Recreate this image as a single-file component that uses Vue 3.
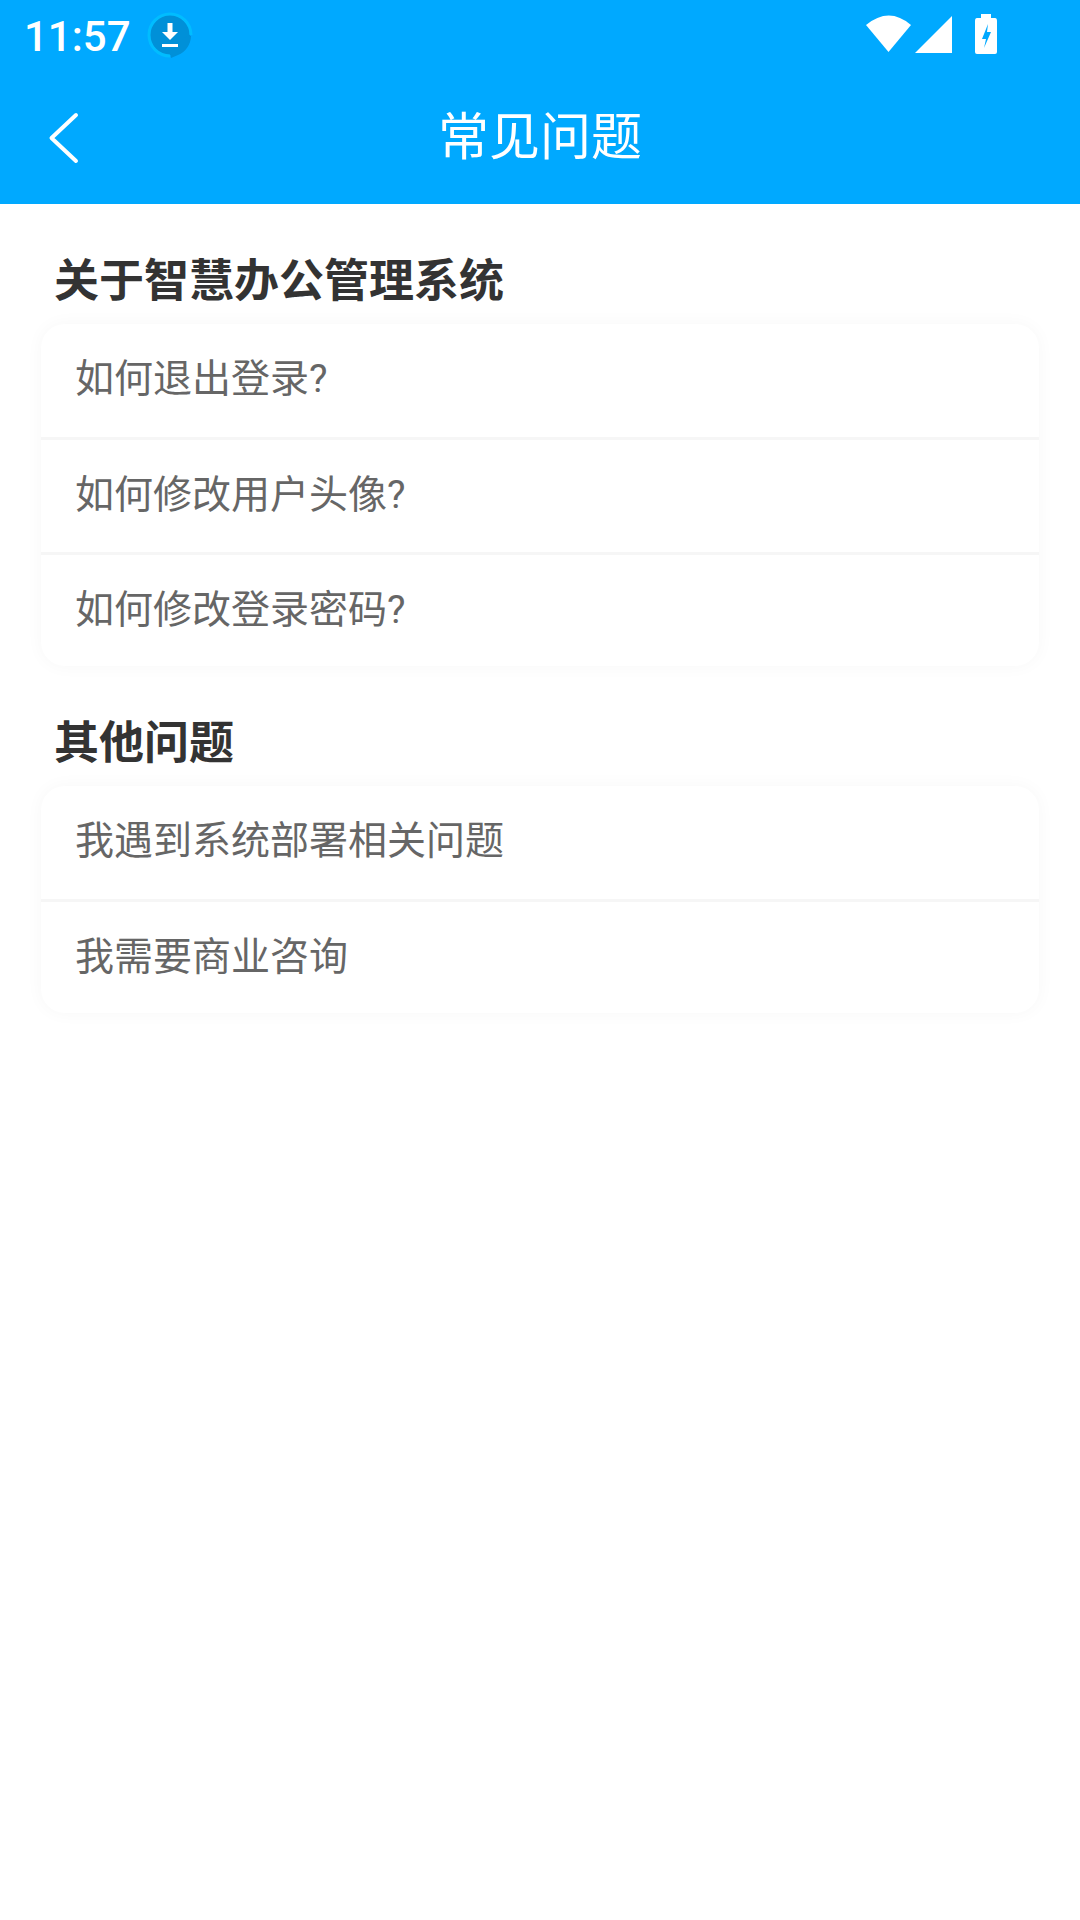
<template>
  <div class="page">
    <header class="top">
      <div class="status">
        <span class="time">11:57</span>
        <svg class="dl" width="46" height="48" viewBox="0 0 46 48">
          <circle cx="23" cy="23" r="20" fill="#0090d8" />
          <path d="M44 23A21 21 0 1 0 23 44" fill="none" stroke="#00bdff" stroke-width="3" />
          <path d="M44 24a21 21 0 0 1-13 19l-7 3-1-6 18-17z" fill="#0090d8" />
          <path d="M20.500 11h5v9h5.500l-8 8-8-8h5.500z M15 32h16v3H15z" fill="#fff" />
        </svg>
        <div class="sys">
          <svg width="46" height="40" viewBox="0 0 46 40"><path d="M0 11Q23-8 45 11L22.500 38z" fill="#fff" /></svg>
          <svg width="38" height="38" viewBox="0 0 38 38"><path d="M37 0V37H0z" fill="#fff" /></svg>
          <svg class="batt" width="24" height="40" viewBox="0 0 24 40">
            <path d="M7 0h10v4h4q2 0 2 3v31q0 2-2 2H3q-2 0-2-2V7q0-3 2-3h4z" fill="#fff" />
            <path d="M14 10l-6 15h4l-2 9 7-16h-4z" fill="#00a9ff" />
          </svg>
        </div>
      </div>
      <div class="nav">
        <svg class="back" width="34" height="54" viewBox="0 0 34 54">
          <path d="M29 3L4.500 26l24.500 23" fill="none" stroke="#fff" stroke-width="4" stroke-linecap="round" stroke-linejoin="round" />
        </svg>
        <h1>常见问题</h1>
      </div>
    </header>

    <section v-for="g in groups" :key="g.title" class="group">
      <h2>{{ g.title }}</h2>
      <ul>
        <li v-for="q in g.items" :key="q">{{ q }}</li>
      </ul>
    </section>
  </div>
</template>

<script setup>
const groups = [
  {
    title: "关于智慧办公管理系统",
    items: ["如何退出登录?", "如何修改用户头像?", "如何修改登录密码?"],
  },
  {
    title: "其他问题",
    items: ["我遇到系统部署相关问题", "我需要商业咨询"],
  },
];
</script>

<style>
html,
body {
  background: #fff;
}
</style>

<style scoped>
.page {
  height: 1920px;
  background: #fff;
  font-family: "Noto Sans CJK SC", sans-serif;
  overflow: hidden;
}
.top {
  height: 204px;
  background: #00a9ff;
  color: #fff;
}
.status {
  height: 72px;
  display: flex;
  align-items: center;
  padding-left: 24px;
}
.time {
  font-family: "Roboto", sans-serif;
  font-size: 42px;
  font-weight: 500;
  line-height: 72px;
  margin-top: 2px;
}
.dl {
  margin-left: 16px;
}
.sys {
  margin-left: auto;
  margin-right: 82px;
  display: flex;
  align-items: flex-end;
  height: 40px;
  margin-top: -4px;
}
.sys svg + svg {
  margin-left: 3px;
}
.sys .batt {
  margin-left: 21px;
}
.nav {
  height: 132px;
  position: relative;
  display: flex;
  align-items: center;
  justify-content: center;
}
.back {
  position: absolute;
  left: 47px;
  top: 40px;
}
h1 {
  margin: -10px 0 0;
  font-size: 51px;
  font-weight: 400;
  line-height: 60px;
}
.group {
  padding: 0 41px;
}
h2 {
  margin: 0;
  padding: 44px 0 0 13px;
  font-size: 45px;
  font-weight: 700;
  line-height: 60px;
  height: 120px;
  box-sizing: border-box;
  color: #333;
}
ul {
  list-style: none;
  margin: 0;
  padding: 0;
  background: #fff;
  border-radius: 24px;
  box-shadow: 0 0 18px rgba(0, 0, 0, 0.035);
}
li {
  height: 113px;
  box-sizing: border-box;
  padding-left: 34px;
  padding-top: 30px;
  font-family: "Roboto", "Noto Sans CJK SC", sans-serif;
  font-size: 39px;
  line-height: 50px;
  color: #666;
}
li + li {
  height: 115px;
  border-top: 3px solid #f6f6f6;
}
li + li:last-child {
  height: 114px;
}
</style>
